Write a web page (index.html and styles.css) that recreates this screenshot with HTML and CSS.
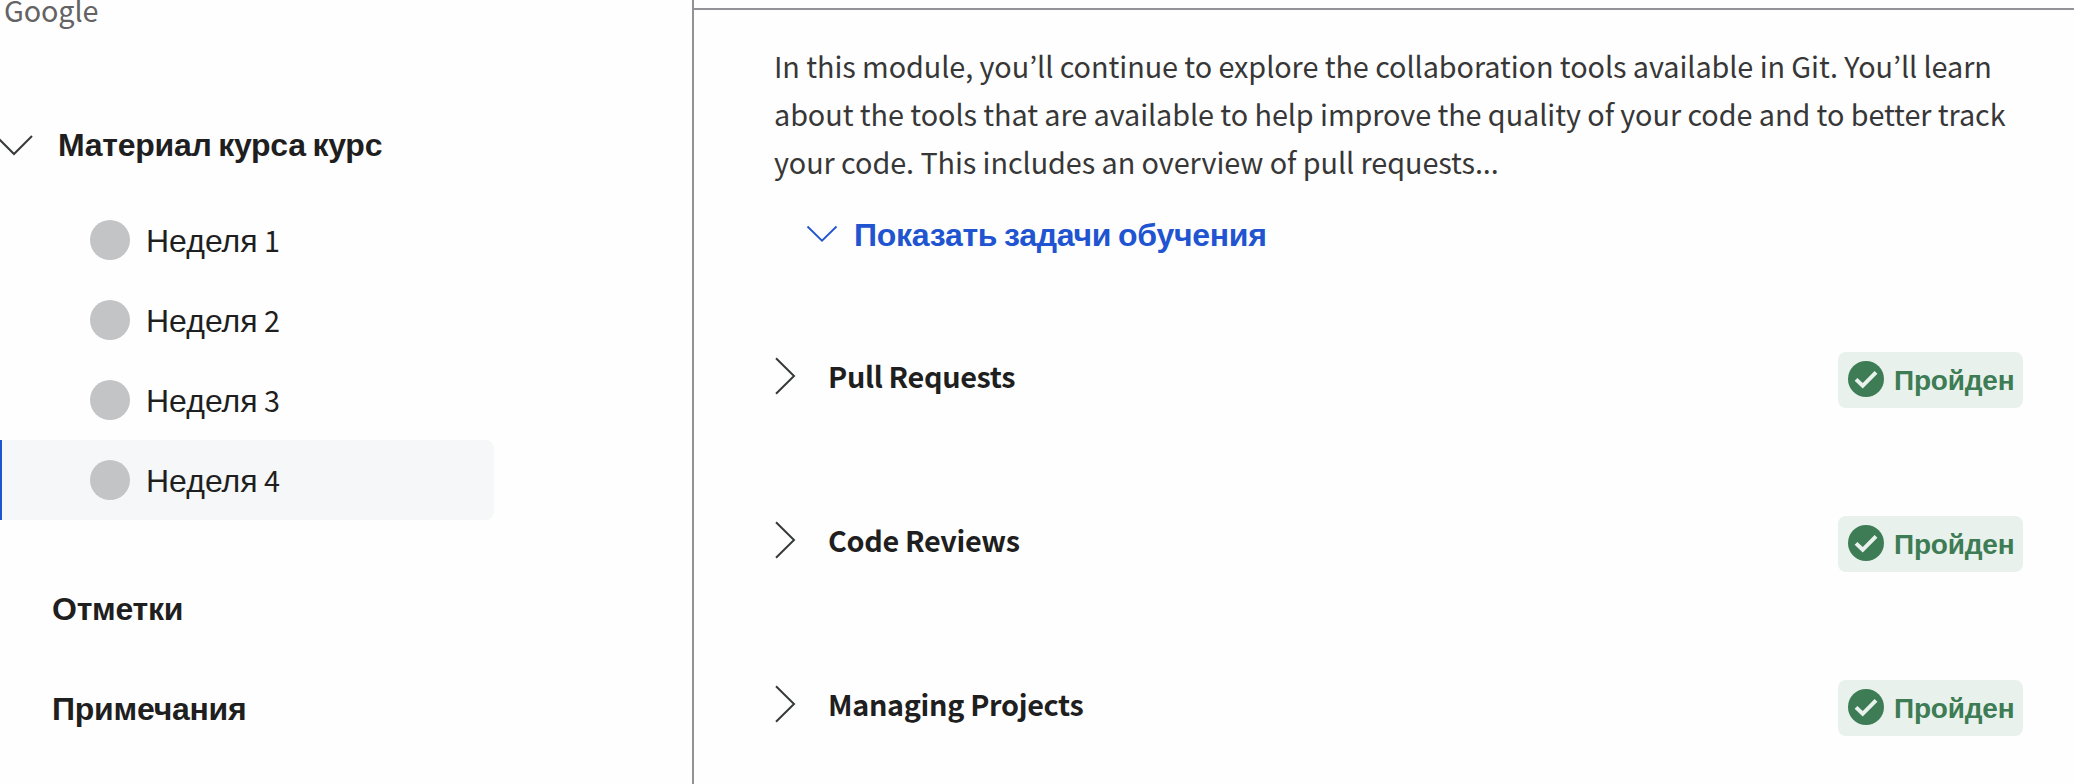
FILE: index.html
```html
<!DOCTYPE html>
<html lang="ru">
<head>
<meta charset="utf-8">
<title>Материал курса</title>
<link rel="stylesheet" href="styles.css">
</head>
<body>
<svg class="defs" width="0" height="0">
  <symbol id="chev-right" viewBox="0 0 24 40"><path d="M2 2.2 20 20 2 37.8"/></symbol>
  <symbol id="check" viewBox="0 0 36 36"><circle cx="18" cy="18" r="18"/><path d="M8 18.4l6.7 6.4L28 11.3"/></symbol>
</svg>
<div class="page">
  <aside class="sidebar">
    <p class="provider">Google</p>
    <div class="material">
      <svg class="material-chev" viewBox="0 0 34 22"><path d="M-4 1 14 19 32 1"/></svg>
      <span class="material-label">Материал курса курс</span>
    </div>
    <ul class="weeks">
      <li class="week"><i class="dot"></i><span class="week-label">Неделя <b class="num">1</b></span></li>
      <li class="week"><i class="dot"></i><span class="week-label">Неделя <b class="num">2</b></span></li>
      <li class="week"><i class="dot"></i><span class="week-label">Неделя <b class="num">3</b></span></li>
      <li class="week current"><i class="dot"></i><span class="week-label">Неделя <b class="num">4</b></span></li>
    </ul>
    <nav class="links">
      <a class="link">Отметки</a>
      <a class="link">Примечания</a>
    </nav>
  </aside>
  <main class="content">
    <p class="intro" lang="en"><span class="line">In this module, you’ll continue to explore the collaboration tools available in Git. You’ll learn</span><span class="line">about the tools that are available to help improve the quality of your code and to better track</span><span class="line">your code. This includes an overview of pull requests...</span></p>
    <a class="goals">
      <svg class="goals-chev" viewBox="0 0 32 18"><path d="M1.5 1.5 16 15.7 30.5 1.5"/></svg>
      <span class="goals-label">Показать задачи обучения</span>
    </a>
    <section class="item">
      <svg class="chev"><use href="#chev-right"/></svg><h3 class="title">Pull Requests</h3>
      <span class="badge"><svg class="check"><use href="#check"/></svg><span class="badge-label">Пройден</span></span>
    </section>
    <section class="item">
      <svg class="chev"><use href="#chev-right"/></svg><h3 class="title">Code Reviews</h3>
      <span class="badge"><svg class="check"><use href="#check"/></svg><span class="badge-label">Пройден</span></span>
    </section>
    <section class="item">
      <svg class="chev"><use href="#chev-right"/></svg><h3 class="title">Managing Projects</h3>
      <span class="badge"><svg class="check"><use href="#check"/></svg><span class="badge-label">Пройден</span></span>
    </section>
  </main>
</div>
</body>
</html>
```

FILE: styles.css
```css
* { box-sizing: border-box; margin: 0; padding: 0; }
body {
  width: 2074px; height: 784px; overflow: hidden;
  background: #fefefe; color: #1f1f1f;
  font-family: "Liberation Sans", sans-serif; font-size: 32px;
}
svg { display: block; flex: none; }
.defs { display: none; }
.page { display: flex; height: 784px; }
.sidebar { width: 694px; flex: none; border-right: 2px solid #929297; }

.provider, .intro, .title, .num { font-family: "Noto Sans CJK KR", sans-serif; font-size: 28.8px; }
.provider { height: 36px; padding-left: 4px; line-height: 20px; letter-spacing: -0.15px; color: #636363; }

.material { display: flex; margin-top: 84px; height: 48px; }
.material-chev { width: 34px; height: 22px; margin-top: 15px; fill: none; stroke: #373a3c; stroke-width: 2; }
.material-label { margin-left: 24px; font-weight: 700; line-height: 50px; letter-spacing: -0.27px; word-spacing: -1.9px; white-space: nowrap; }

.weeks { list-style: none; margin-top: 32px; }
.week { display: flex; align-items: center; width: 494px; height: 80px; padding-left: 90px; }
.current { background: #f5f7f8; border-left: 2px solid #2054d0; border-radius: 0 8px 8px 0; padding-left: 88px; }
.dot { width: 40px; height: 40px; border-radius: 50%; background: #c3c4c6; }
.week-label { margin-left: 16px; line-height: 48px; word-spacing: -2.5px; white-space: nowrap; }
.num { font-weight: 400; }

.links { display: flex; flex-direction: column; padding: 39px 0 0 52px; }
.link { height: 100px; line-height: 100px; font-weight: 700; letter-spacing: -0.25px; }

.content { flex: 1; border-top: 2px solid #929297; margin-top: 8px; padding-left: 80px; }
.intro { margin-top: 32px; line-height: 48px; letter-spacing: -0.07px; color: #373737; }
.line { display: block; white-space: nowrap; }
.goals { display: flex; align-items: center; height: 48px; margin-top: 24px; padding-left: 32px; color: #2054d0; }
.goals-chev { width: 32px; height: 18px; fill: none; stroke: currentColor; stroke-width: 1.8; }
.goals-label { margin-left: 16px; padding-top: 2px; font-weight: 700; letter-spacing: -0.27px; word-spacing: -1.8px; white-space: nowrap; }

.item { display: flex; height: 56px; margin-bottom: 108px; padding-right: 51px; }
.goals + .item { margin-top: 94px; }
.chev { width: 24px; height: 40px; margin-top: 4px; fill: none; stroke: #373a3c; stroke-width: 2; }
.title { margin-left: 30px; font-weight: 700; line-height: 48px; letter-spacing: -0.33px; white-space: nowrap; }
.badge { display: flex; margin-left: auto; width: 185px; height: 56px; border-radius: 8px; background: #e9f1ed; color: #3d7c54; }
.check { width: 36px; height: 36px; margin: 9px 0 0 10px; }
#check circle { fill: #3d7c54; }
#check path { fill: none; stroke: #e9f1ed; stroke-width: 4; }
.badge-label { margin-left: 10px; font-size: 28px; font-weight: 700; line-height: 57px; letter-spacing: -0.2px; white-space: nowrap; }
```
